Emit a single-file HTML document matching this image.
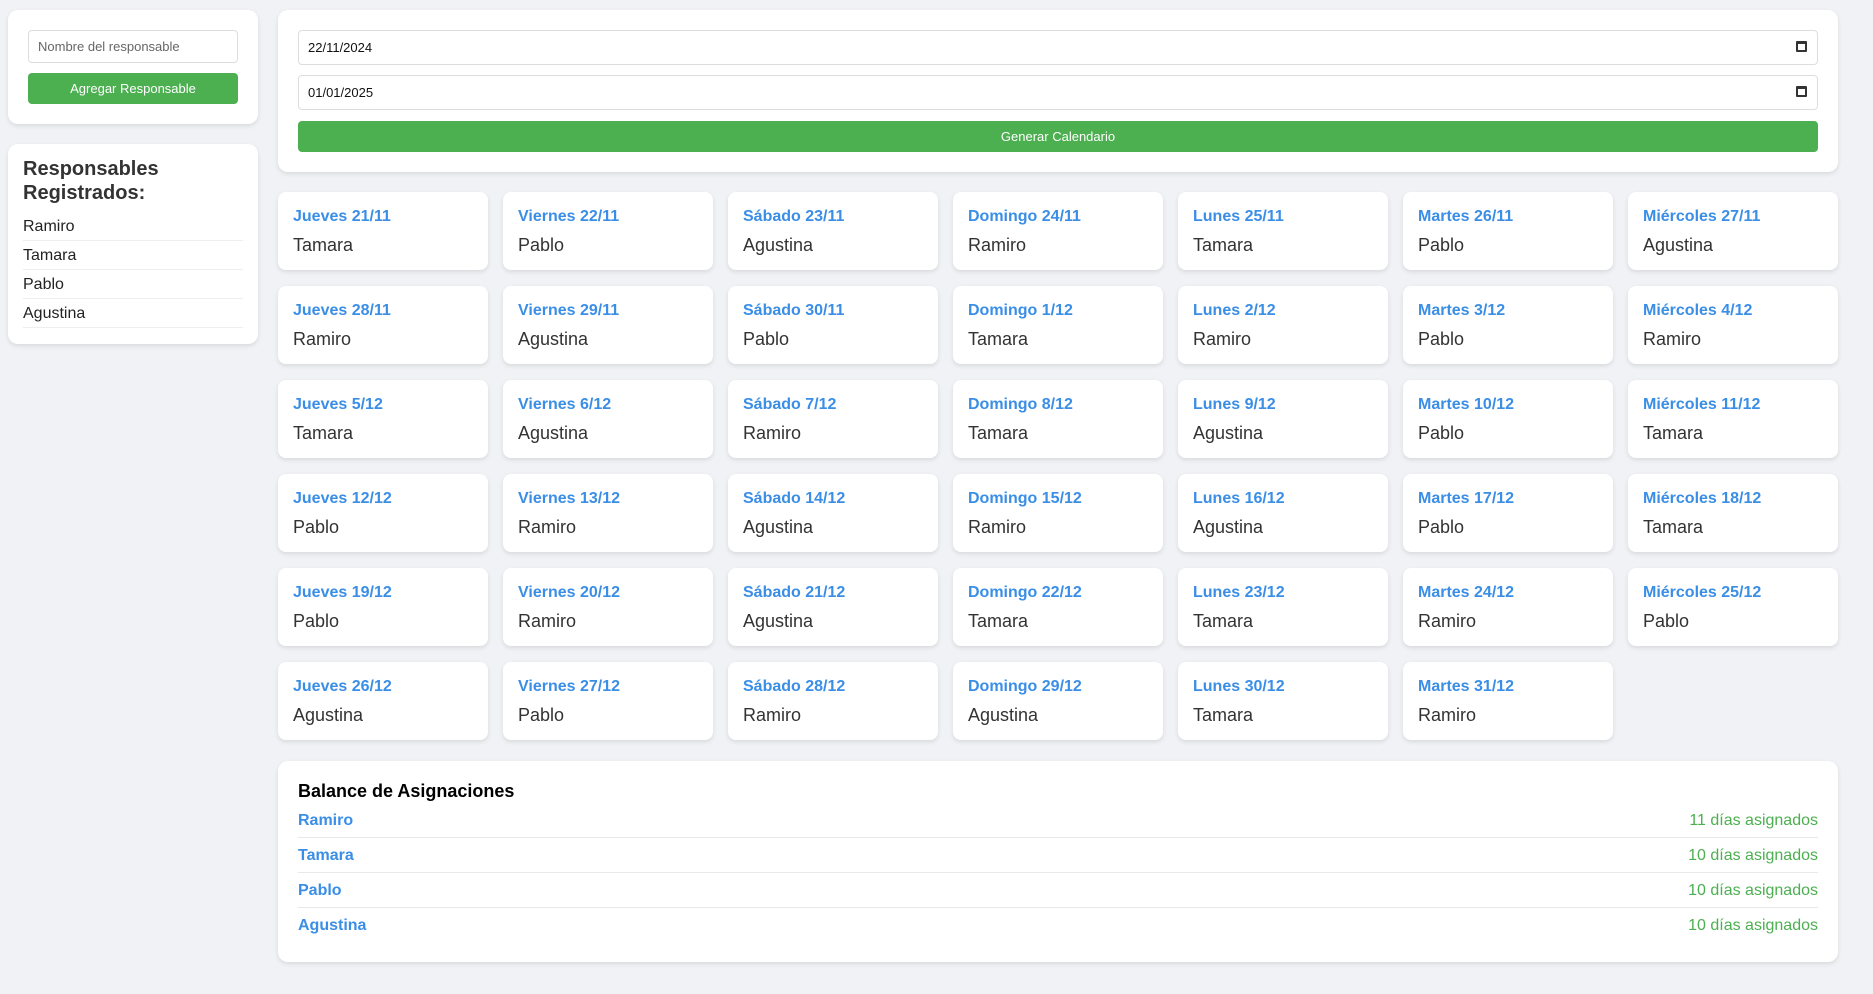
<!DOCTYPE html>
<html><head><meta charset="utf-8"><style>
*{box-sizing:border-box;margin:0;padding:0}
body{width:1873px;height:994px;background:#f0f2f5;font-family:"Liberation Sans",Arial,sans-serif;position:relative;overflow:hidden;color:#333}
.box{position:absolute;background:#fff;border-radius:10px;box-shadow:0 2px 5px rgba(0,0,0,0.1)}
.inp{position:absolute;border:1px solid #ddd;border-radius:4px;background:#fff;font-size:13px;display:flex;align-items:center;padding-left:9px}
.btn{position:absolute;background:#4caf50;color:#fff;border-radius:4px;font-size:13px;display:flex;align-items:center;justify-content:center}
.cal{position:absolute;right:10px;top:10px;width:11px;height:11px;border:2px solid #333;border-top-width:3px;border-radius:1px}
.li{position:absolute;left:23px;width:220px;height:29px;border-bottom:1px solid #eee;font-size:16px;color:#222;line-height:30px}
.day{position:absolute;width:210px;height:78px;background:#fff;border-radius:8px;box-shadow:0 2px 5px rgba(0,0,0,0.1)}
.day b{position:absolute;left:15px;top:16px;font-size:16px;color:#3a8ee6}
.day span{position:absolute;left:15px;top:43px;font-size:18px;color:#333}
.row{position:absolute;left:298px;width:1520px;height:35px;border-bottom:1px solid #e8e8e8}
.row b{position:absolute;left:0;top:9px;font-size:16px;color:#3a8ee6}
.row span{position:absolute;right:0;top:9px;font-size:16px;color:#4caf50}
</style></head><body>
<div class="box" style="left:8px;top:10px;width:250px;height:114px"></div>
<div class="inp" style="left:28px;top:30px;width:210px;height:33px;color:#666">Nombre del responsable</div>
<div class="btn" style="left:28px;top:73px;width:210px;height:31px">Agregar Responsable</div>
<div class="box" style="left:8px;top:144px;width:250px;height:200px"></div>
<div style="position:absolute;left:23px;top:157px;font-size:20px;font-weight:bold;color:#333;line-height:24px">Responsables<br>Registrados:</div>
<div class="li" style="top:212px">Ramiro</div>
<div class="li" style="top:241px">Tamara</div>
<div class="li" style="top:270px">Pablo</div>
<div class="li" style="top:299px">Agustina</div>

<div class="box" style="left:278px;top:10px;width:1560px;height:162px"></div>
<div class="inp" style="left:298px;top:30px;width:1520px;height:35px;color:#111">22/11/2024<div class="cal"></div></div>
<div class="inp" style="left:298px;top:75px;width:1520px;height:35px;color:#111">01/01/2025<div class="cal"></div></div>
<div class="btn" style="left:298px;top:121px;width:1520px;height:31px">Generar Calendario</div>

<div class="box" style="left:278px;top:761px;width:1560px;height:201px"></div>
<div style="position:absolute;left:298px;top:781px;font-size:18px;font-weight:bold;color:#000">Balance de Asignaciones</div>
<div class="row" style="top:803px"><b>Ramiro</b><span>11 días asignados</span></div>
<div class="row" style="top:838px"><b>Tamara</b><span>10 días asignados</span></div>
<div class="row" style="top:873px"><b>Pablo</b><span>10 días asignados</span></div>
<div class="row" style="top:908px;border-bottom:none"><b>Agustina</b><span>10 días asignados</span></div>

<div class="day" style="left:278px;top:192px"><b>Jueves 21/11</b><span>Tamara</span></div>
<div class="day" style="left:503px;top:192px"><b>Viernes 22/11</b><span>Pablo</span></div>
<div class="day" style="left:728px;top:192px"><b>Sábado 23/11</b><span>Agustina</span></div>
<div class="day" style="left:953px;top:192px"><b>Domingo 24/11</b><span>Ramiro</span></div>
<div class="day" style="left:1178px;top:192px"><b>Lunes 25/11</b><span>Tamara</span></div>
<div class="day" style="left:1403px;top:192px"><b>Martes 26/11</b><span>Pablo</span></div>
<div class="day" style="left:1628px;top:192px"><b>Miércoles 27/11</b><span>Agustina</span></div>

<div class="day" style="left:278px;top:286px"><b>Jueves 28/11</b><span>Ramiro</span></div>
<div class="day" style="left:503px;top:286px"><b>Viernes 29/11</b><span>Agustina</span></div>
<div class="day" style="left:728px;top:286px"><b>Sábado 30/11</b><span>Pablo</span></div>
<div class="day" style="left:953px;top:286px"><b>Domingo 1/12</b><span>Tamara</span></div>
<div class="day" style="left:1178px;top:286px"><b>Lunes 2/12</b><span>Ramiro</span></div>
<div class="day" style="left:1403px;top:286px"><b>Martes 3/12</b><span>Pablo</span></div>
<div class="day" style="left:1628px;top:286px"><b>Miércoles 4/12</b><span>Ramiro</span></div>

<div class="day" style="left:278px;top:380px"><b>Jueves 5/12</b><span>Tamara</span></div>
<div class="day" style="left:503px;top:380px"><b>Viernes 6/12</b><span>Agustina</span></div>
<div class="day" style="left:728px;top:380px"><b>Sábado 7/12</b><span>Ramiro</span></div>
<div class="day" style="left:953px;top:380px"><b>Domingo 8/12</b><span>Tamara</span></div>
<div class="day" style="left:1178px;top:380px"><b>Lunes 9/12</b><span>Agustina</span></div>
<div class="day" style="left:1403px;top:380px"><b>Martes 10/12</b><span>Pablo</span></div>
<div class="day" style="left:1628px;top:380px"><b>Miércoles 11/12</b><span>Tamara</span></div>

<div class="day" style="left:278px;top:474px"><b>Jueves 12/12</b><span>Pablo</span></div>
<div class="day" style="left:503px;top:474px"><b>Viernes 13/12</b><span>Ramiro</span></div>
<div class="day" style="left:728px;top:474px"><b>Sábado 14/12</b><span>Agustina</span></div>
<div class="day" style="left:953px;top:474px"><b>Domingo 15/12</b><span>Ramiro</span></div>
<div class="day" style="left:1178px;top:474px"><b>Lunes 16/12</b><span>Agustina</span></div>
<div class="day" style="left:1403px;top:474px"><b>Martes 17/12</b><span>Pablo</span></div>
<div class="day" style="left:1628px;top:474px"><b>Miércoles 18/12</b><span>Tamara</span></div>

<div class="day" style="left:278px;top:568px"><b>Jueves 19/12</b><span>Pablo</span></div>
<div class="day" style="left:503px;top:568px"><b>Viernes 20/12</b><span>Ramiro</span></div>
<div class="day" style="left:728px;top:568px"><b>Sábado 21/12</b><span>Agustina</span></div>
<div class="day" style="left:953px;top:568px"><b>Domingo 22/12</b><span>Tamara</span></div>
<div class="day" style="left:1178px;top:568px"><b>Lunes 23/12</b><span>Tamara</span></div>
<div class="day" style="left:1403px;top:568px"><b>Martes 24/12</b><span>Ramiro</span></div>
<div class="day" style="left:1628px;top:568px"><b>Miércoles 25/12</b><span>Pablo</span></div>

<div class="day" style="left:278px;top:662px"><b>Jueves 26/12</b><span>Agustina</span></div>
<div class="day" style="left:503px;top:662px"><b>Viernes 27/12</b><span>Pablo</span></div>
<div class="day" style="left:728px;top:662px"><b>Sábado 28/12</b><span>Ramiro</span></div>
<div class="day" style="left:953px;top:662px"><b>Domingo 29/12</b><span>Agustina</span></div>
<div class="day" style="left:1178px;top:662px"><b>Lunes 30/12</b><span>Tamara</span></div>
<div class="day" style="left:1403px;top:662px"><b>Martes 31/12</b><span>Ramiro</span></div>
</body></html>
